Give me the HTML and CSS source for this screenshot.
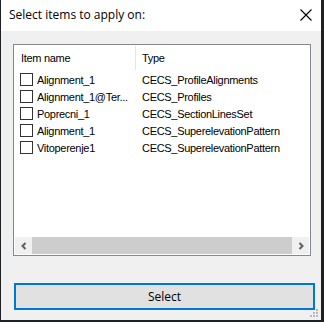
FILE: index.html
```html
<!DOCTYPE html>
<html>
<head>
<meta charset="utf-8">
<link rel="stylesheet" href="styles.css">
</head>
<body>
<div class="window">
  <div class="titlebar">
    <span class="title">Select items to apply on:</span>
    <svg class="close" width="12" height="12" viewBox="0 0 12 12"><path d="M0.5 0.5L11.5 11.5M11.5 0.5L0.5 11.5" stroke="#000" stroke-width="1.1" fill="none"/></svg>
  </div>
  <div class="content">
    <div class="list">
      <div class="header">
        <div class="col-name">Item name</div>
        <div class="divider"></div>
        <div class="col-type">Type</div>
      </div>
      <div class="rows">
        <div class="row"><span class="check"></span><span class="name">Alignment_1</span><span class="type">CECS_ProfileAlignments</span></div>
        <div class="row"><span class="check"></span><span class="name">Alignment_1@Ter...</span><span class="type">CECS_Profiles</span></div>
        <div class="row"><span class="check"></span><span class="name">Poprecni_1</span><span class="type">CECS_SectionLinesSet</span></div>
        <div class="row"><span class="check"></span><span class="name">Alignment_1</span><span class="type">CECS_SuperelevationPattern</span></div>
        <div class="row"><span class="check"></span><span class="name">Vitoperenje1</span><span class="type">CECS_SuperelevationPattern</span></div>
      </div>
      <div class="hscroll">
        <div class="arrow"><svg width="8" height="8" viewBox="0 0 8 8"><path d="M5.5 1L2.5 4L5.5 7" stroke="#606060" stroke-width="2" fill="none"/></svg></div>
        <div class="thumb"></div>
        <div class="arrow"><svg width="8" height="8" viewBox="0 0 8 8"><path d="M2.5 1L5.5 4L2.5 7" stroke="#606060" stroke-width="2" fill="none"/></svg></div>
      </div>
    </div>
    <button class="select-btn">Select</button>
  </div>
  <svg class="grip" width="8" height="8" viewBox="0 0 8 8">
    <rect x="6" y="0" width="2" height="2" fill="#b8b8b8"/>
    <rect x="3" y="3" width="2" height="2" fill="#b8b8b8"/>
    <rect x="6" y="3" width="2" height="2" fill="#b8b8b8"/>
    <rect x="0" y="6" width="2" height="2" fill="#b8b8b8"/>
    <rect x="3" y="6" width="2" height="2" fill="#b8b8b8"/>
    <rect x="6" y="6" width="2" height="2" fill="#b8b8b8"/>
  </svg>
</div>
</body>
</html>
```

FILE: styles.css
```css
html, body {
  margin: 0;
  padding: 0;
  background: #1e2124;
  width: 324px;
  height: 322px;
  overflow: hidden;
}

.window {
  position: relative;
  margin-left: 1px;
  width: 320px;
  height: 320px;
  background: #f0f0f0;
  display: flex;
  flex-direction: column;
  font-family: "Liberation Sans", Arial, sans-serif;
}

.titlebar {
  height: 31px;
  background: #ffffff;
  display: flex;
  align-items: center;
  justify-content: space-between;
  padding: 0 9px 0 8px;
  box-sizing: border-box;
}

.title {
  font-family: "Open Sans", "Noto Sans", sans-serif;
  font-size: 12px;
  color: #000;
  margin-top: -2px;
}

.close {
  margin-top: -2px;
}

.content {
  display: flex;
  flex-direction: column;
  padding: 13px 0 0 12px;
}

.list {
  width: 298px;
  height: 212px;
  box-sizing: border-box;
  border: 1px solid #828790;
  background: #ffffff;
  display: flex;
  flex-direction: column;
}

.header {
  height: 25px;
  display: flex;
  align-items: center;
  font-size: 11px;
  letter-spacing: -0.3px;
  color: #000;
  padding-top: 1px;
  box-sizing: border-box;
}

.col-name {
  width: 121px;
  padding-left: 7px;
  box-sizing: border-box;
}

.divider {
  width: 1px;
  align-self: stretch;
  background: #e5e5e5;
}

.col-type {
  padding-left: 6px;
}

.rows {
  flex: 1;
  display: flex;
  flex-direction: column;
  padding-top: 1px;
}

.row {
  height: 17px;
  display: flex;
  align-items: center;
  font-size: 11px;
  letter-spacing: -0.3px;
  color: #000;
}

.check {
  width: 11px;
  height: 11px;
  border: 1px solid #333333;
  background: #fff;
  margin-left: 6px;
  flex: none;
}

.name {
  width: 109px;
  padding-left: 4px;
  box-sizing: border-box;
  white-space: nowrap;
}

.type {
  white-space: nowrap;
}

.hscroll {
  height: 17px;
  display: flex;
  background: #f0f0f0;
  margin: 0 0 1px 1px;
  width: 294px;
}

.arrow {
  width: 17px;
  display: flex;
  align-items: center;
  justify-content: center;
}

.thumb {
  flex: 1;
  background: #cdcdcd;
}

.select-btn {
  margin-top: 27px;
  margin-left: 1px;
  width: 301px;
  height: 27px;
  border: 2px solid #0078d7;
  background: #e1e1e1;
  font-family: "Open Sans", "Noto Sans", sans-serif;
  font-size: 12px;
  color: #000;
  padding: 0;
}

.grip {
  position: absolute;
  right: 3px;
  bottom: 3px;
}
```
